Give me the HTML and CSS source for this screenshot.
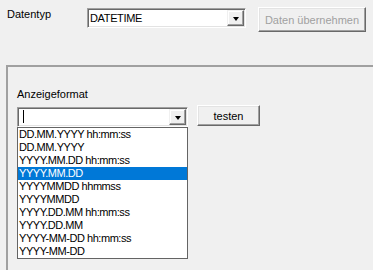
FILE: index.html
```html
<!DOCTYPE html>
<html lang="de">
<head>
    <meta charset="UTF-8">
    <title>Datentyp</title>
    <link rel="stylesheet" href="styles.css">
</head>
<body>
    <div class="top">
        <div class="label type-label">Datentyp</div>
        <div class="combo type-combo">
            <span class="combo-text">DATETIME</span>
            <span class="arrow-btn"><span class="arrow"></span></span>
        </div>
        <button class="btn apply-btn" disabled>Daten übernehmen</button>
    </div>

    <div class="group">
        <div class="label">Anzeigeformat</div>
        <div class="format-row">
            <div class="format-col">
                <div class="combo format-combo">
                    <span class="combo-text"><span class="caret"></span></span>
                    <span class="arrow-btn"><span class="arrow"></span></span>
                </div>
                <ul class="list">
                    <li>DD.MM.YYYY hh:mm:ss</li>
                    <li>DD.MM.YYYY</li>
                    <li>YYYY.MM.DD hh:mm:ss</li>
                    <li class="selected">YYYY.MM.DD</li>
                    <li>YYYYMMDD hhmmss</li>
                    <li>YYYYMMDD</li>
                    <li>YYYY.DD.MM hh:mm:ss</li>
                    <li>YYYY.DD.MM</li>
                    <li>YYYY-MM-DD hh:mm:ss</li>
                    <li>YYYY-MM-DD</li>
                </ul>
            </div>
            <button class="btn test-btn">testen</button>
        </div>
    </div>
</body>
</html>
```

FILE: styles.css
```css
body {
    margin: 0;
    height: 100vh;
    background: #f0f0f0;
    font-family: "Liberation Sans", Arial, sans-serif;
    font-size: 11px;
    color: #000;
    overflow: hidden;
    display: flex;
    flex-direction: column;
}
.top {
    display: flex;
    align-items: flex-start;
    padding: 7px 0 0 7px;
}
.label {
    line-height: 13px;
}
.type-label {
    width: 80px;
    margin-top: 1px;
}
.combo {
    display: flex;
    box-sizing: border-box;
    height: 20px;
    padding: 1px;
    background: #fff;
    border: 1px solid;
    border-color: #a0a0a0 #fff #fff #a0a0a0;
    box-shadow: inset 1px 1px #696969, inset -1px -1px #e3e3e3;
}
.type-combo {
    width: 159px;
    margin-top: 1px;
}
.combo-text {
    flex: 1;
    line-height: 16px;
    padding-left: 1px;
    letter-spacing: -0.35px;
}
.arrow-btn {
    width: 17px;
    height: 16px;
    box-sizing: border-box;
    background: #f0f0f0;
    border: 1px solid;
    border-color: #f0f0f0 #696969 #696969 #f0f0f0;
    box-shadow: inset -1px -1px #a0a0a0, inset 1px 1px #fff;
    display: flex;
    align-items: center;
    justify-content: center;
}
.arrow {
    width: 0;
    height: 0;
    border-left: 3.5px solid transparent;
    border-right: 3.5px solid transparent;
    border-top: 4px solid #000;
    margin-top: 1px;
}
.btn {
    box-sizing: border-box;
    font-family: "Liberation Sans", Arial, sans-serif;
    font-size: 11px;
    color: #000;
    background: #f0f0f0;
    padding: 0;
    border: 1px solid;
    border-color: #fff #696969 #696969 #fff;
    box-shadow: inset -1px -1px #a0a0a0, inset 1px 1px #e3e3e3;
}
.apply-btn {
    width: 108px;
    height: 25px;
    margin-left: 12px;
    color: #a0a0a0;
}
.group {
    flex: 1;
    margin: 33px 0 0 6px;
    border-top: 2px solid #a0a0a0;
    border-left: 2px solid #a0a0a0;
    padding: 21px 0 0 9px;
}
.format-row {
    display: flex;
    align-items: flex-start;
    margin-top: 4px;
}
.format-col {
    width: 171px;
    padding-top: 2px;
}
.format-combo {
    width: 171px;
}
.caret {
    display: inline-block;
    width: 1px;
    height: 13px;
    background: #000;
    margin: 1px 0 0 3px;
    vertical-align: top;
}
.list {
    list-style: none;
    margin: 0;
    padding: 0;
    background: #fff;
    border: 1px solid #646464;
}
.list li {
    height: 13px;
    line-height: 13px;
    padding-left: 1px;
    letter-spacing: -0.45px;
    white-space: nowrap;
}
.list .selected {
    background: #0078d7;
    color: #fff;
}
.test-btn {
    width: 63px;
    height: 21px;
    margin-left: 9px;
}
```
